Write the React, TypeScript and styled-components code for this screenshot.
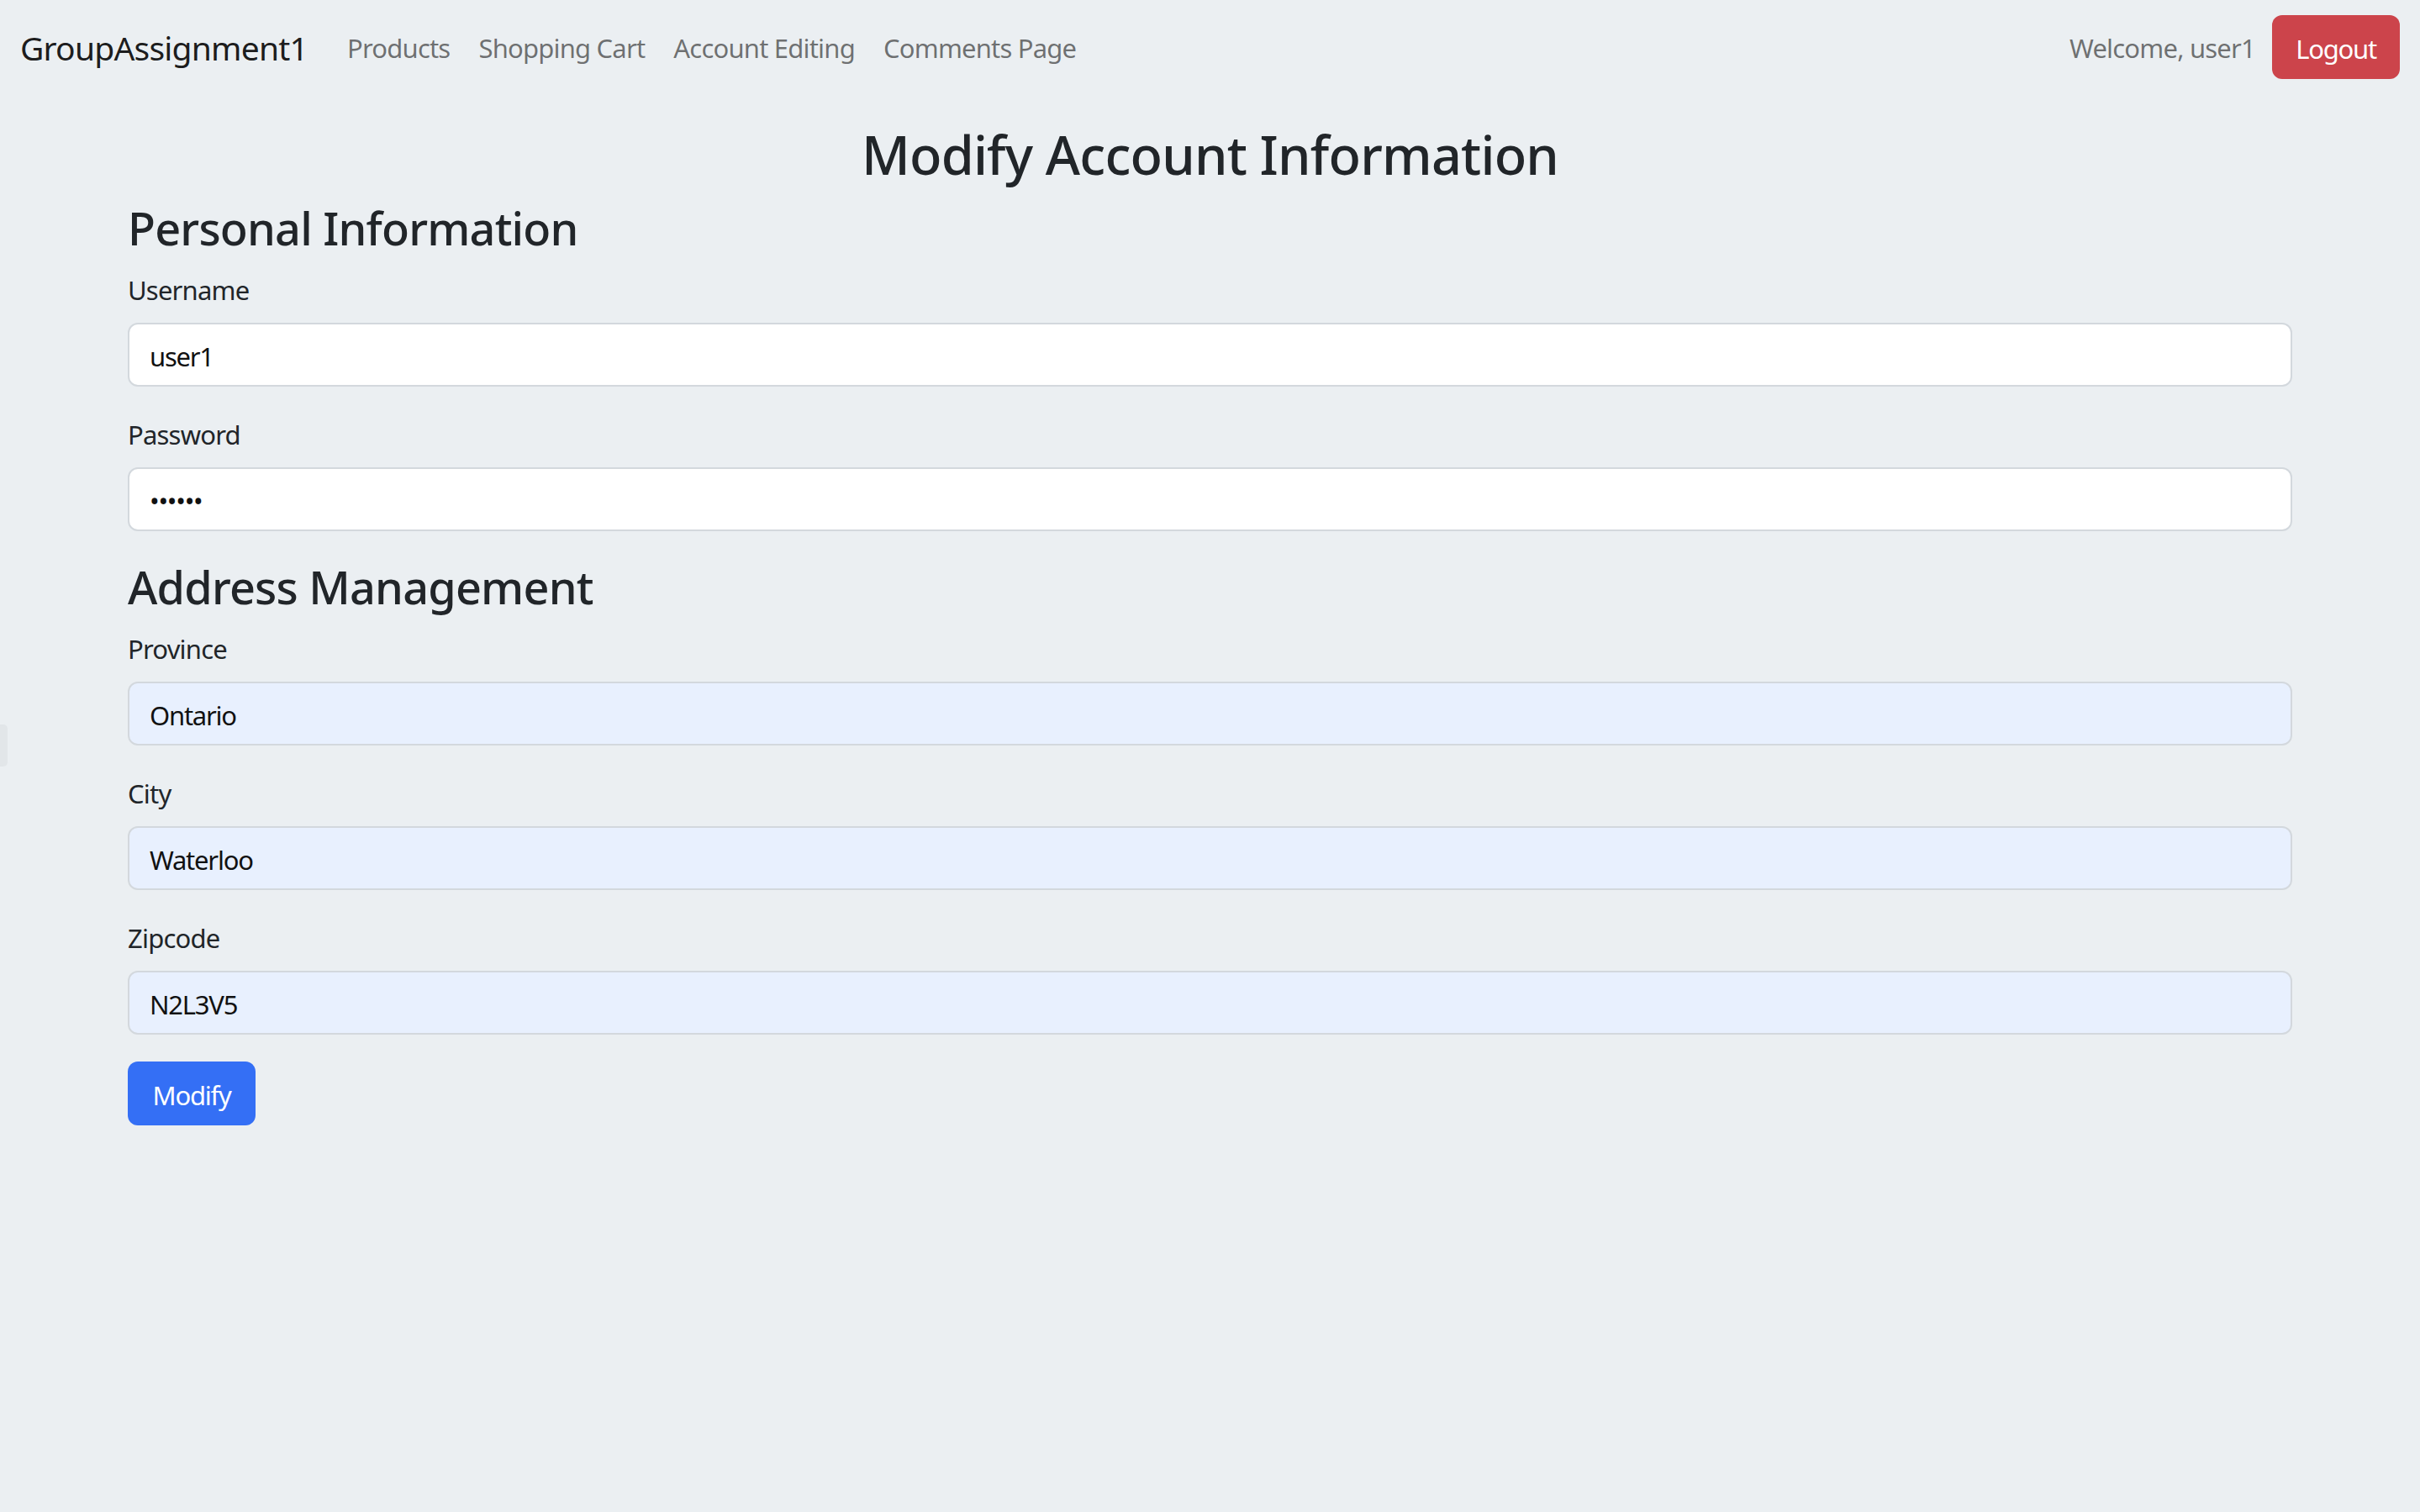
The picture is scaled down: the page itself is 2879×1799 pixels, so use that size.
import React from 'react';
import styled, { createGlobalStyle } from 'styled-components';

// -- Global --

const GlobalStyle = createGlobalStyle`
  html, body {
    margin: 0;
    padding: 0;
    background-color: #ebeff2;
  }
  body {
    font-family: "Noto Sans", "Open Sans", sans-serif;
    color: #212529;
    letter-spacing: -0.05em;
    min-height: 1799px;
  }
  * { box-sizing: border-box; }
`;

// -- Navbar --

const NavBar = styled.nav`
  height: 112px;
  padding: 0 24px;
  display: flex;
  align-items: center;
  justify-content: space-between;
`;

const NavLeft = styled.div`
  display: flex;
  align-items: center;
  padding-top: 2px;
`;

const Brand = styled.a`
  font-size: 39px;
  line-height: 60px;
  color: rgba(0, 0, 0, 0.9);
  text-decoration: none;
  margin-right: 30px;
`;

const NavLinks = styled.div`
  display: flex;
  align-items: center;
`;

const NavLink = styled.a`
  font-size: 31px;
  line-height: 48px;
  padding: 16px 17px;
  color: rgba(0, 0, 0, 0.55);
  text-decoration: none;
`;

const NavRight = styled.div`
  display: flex;
  align-items: center;
  gap: 20px;
`;

const Welcome = styled.span`
  font-size: 31px;
  padding-top: 2px;
  color: rgba(0, 0, 0, 0.55);
`;

const Button = styled.button<{ $variant: 'danger' | 'primary' }>`
  height: 76px;
  min-width: 152px;
  padding: 3px 24px 0;
  border: none;
  border-radius: 12px;
  font-family: inherit;
  font-size: 31px;
  letter-spacing: -0.04em;
  color: #fff;
  cursor: pointer;
  background-color: ${p => (p.$variant === 'danger' ? '#cc444b' : '#346ff5')};
`;

// -- Form --

const Container = styled.main`
  max-width: 2623px;
  margin: 32px auto 0;
  padding: 0 24px;
`;

const Title = styled.h1`
  margin: 0 0 16px;
  padding-top: 3px;
  height: 77px;
  text-align: center;
  font-size: 63px;
  font-weight: 500;
  line-height: 74px;
`;

const SectionTitle = styled.h3`
  margin: 0 0 16px;
  padding-top: 2px;
  height: 67px;
  font-size: 54px;
  font-weight: 500;
  line-height: 65px;
`;

const Field = styled.div`
  margin-bottom: 32px;
`;

const Label = styled.label`
  display: block;
  margin-bottom: 16px;
  font-size: 31px;
  line-height: 48px;
  padding-top: 1px;
  height: 48px;
`;

const Input = styled.input<{ $autofill?: boolean }>`
  display: block;
  width: 100%;
  height: 76px;
  padding: 4px 24px 0;
  border: 2px solid #d3d8dd;
  border-radius: 12px;
  font-family: inherit;
  font-size: 31px;
  letter-spacing: -0.04em;
  color: #111;
  outline: none;
  background-color: ${p => (p.$autofill ? '#e8f0fe' : '#fff')};
`;

const SideHandle = styled.div`
  position: fixed;
  left: 0;
  top: 862px;
  width: 9px;
  height: 50px;
  background: #e2e6e9;
  border-radius: 0 5px 5px 0;
`;

const fields = [
  { section: 'Personal Information', items: [
    { label: 'Username', value: 'user1', type: 'text', autofill: false },
    { label: 'Password', value: 'secret', type: 'password', autofill: false },
  ] },
  { section: 'Address Management', items: [
    { label: 'Province', value: 'Ontario', type: 'text', autofill: true },
    { label: 'City', value: 'Waterloo', type: 'text', autofill: true },
    { label: 'Zipcode', value: 'N2L3V5', type: 'text', autofill: true },
  ] },
];

export default function App() {
  return (
    <>
      <GlobalStyle />
      <NavBar>
        <NavLeft>
          <Brand href="#">GroupAssignment1</Brand>
          <NavLinks>
            <NavLink href="#">Products</NavLink>
            <NavLink href="#">Shopping Cart</NavLink>
            <NavLink href="#">Account Editing</NavLink>
            <NavLink href="#">Comments Page</NavLink>
          </NavLinks>
        </NavLeft>
        <NavRight>
          <Welcome>Welcome, user1</Welcome>
          <Button $variant="danger">Logout</Button>
        </NavRight>
      </NavBar>

      <Container>
        <Title>Modify Account Information</Title>
        {fields.map(group => (
          <React.Fragment key={group.section}>
            <SectionTitle>{group.section}</SectionTitle>
            {group.items.map(f => (
              <Field key={f.label}>
                <Label>{f.label}</Label>
                <Input type={f.type} defaultValue={f.value} $autofill={f.autofill} />
              </Field>
            ))}
          </React.Fragment>
        ))}
        <Button $variant="primary">Modify</Button>
      </Container>
      <SideHandle />
    </>
  );
}
